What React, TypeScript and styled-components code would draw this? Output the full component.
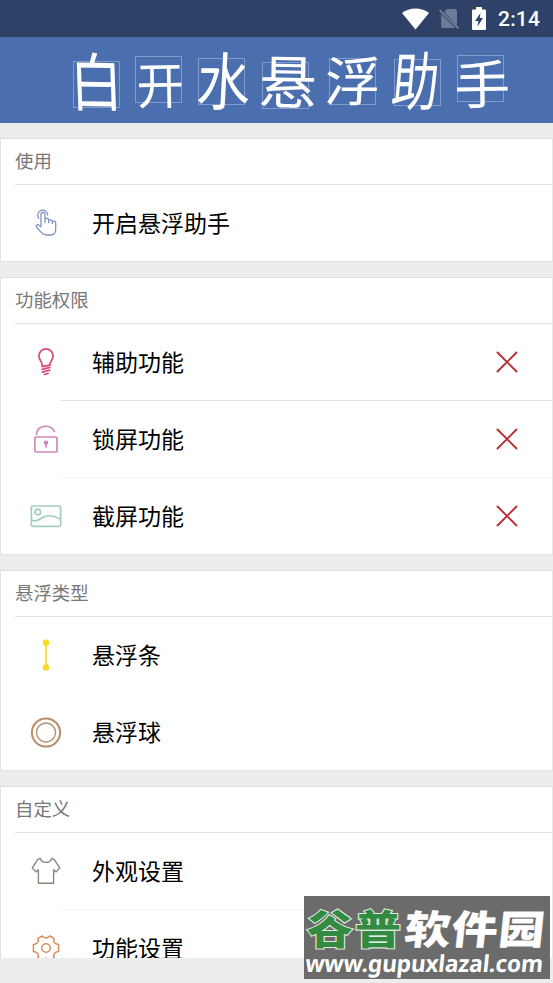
import React from 'react';
import styled, { createGlobalStyle } from 'styled-components';

const GlobalStyle = createGlobalStyle`
  * { box-sizing: border-box; }
  body {
    margin: 0;
    background: #ededed;
    font-family: "Noto Sans CJK SC", sans-serif;
    overflow: hidden;
  }
`;

const Screen = styled.div`
  position: relative;
  width: 553px;
  height: 983px;
  overflow: hidden;
  background: #ededed;
`;

const StatusBar = styled.header`
  height: 37px;
  display: flex;
  align-items: center;
  padding: 0 12px 0 402px;
  background: #2e4268;
  color: #fff;
`;

const StatusIcon = styled.svg<{ $gap: number }>`
  display: block;
  flex: none;
  margin-right: ${p => p.$gap}px;
`;

const Clock = styled.span`
  font: 500 21px/37px Roboto, sans-serif;
  letter-spacing: 0.2px;
  padding-top: 1px;
`;

const Banner = styled.h1`
  margin: 0;
  height: 86px;
  padding-left: 73px;
  display: flex;
  align-items: flex-start;
  background: #4b6fae;
`;

const GlyphCell = styled.span<{ $top: number; $gap: number }>`
  flex: none;
  width: 47px;
  height: 47px;
  margin-top: ${p => p.$top}px;
  margin-right: ${p => p.$gap}px;
  border: 1px solid #809bcb;
  display: flex;
  align-items: center;
  justify-content: center;
`;

const Glyph = styled.span<{ $shape: string }>`
  color: #fff;
  font-size: 50px;
  line-height: 50px;
  font-weight: 400;
  transform: ${p => p.$shape};
`;

const List = styled.main`
  height: 835px;
  padding-top: 15px;
  overflow: hidden;
`;

const Card = styled.section<{ $gap: number }>`
  background: #fff;
  border-left: 1px solid #e3e3e3;
  border-right: 1px solid #e8e8e8;
  box-shadow: inset 0 1px #dedede, 0 1px #e2e2e2;
  margin-bottom: ${p => p.$gap}px;
`;

const CardTitle = styled.h2`
  margin: 0 0 0 14px;
  height: 47px;
  border-bottom: 1px solid #dfdfdf;
  font-size: 18.4px;
  font-weight: 400;
  line-height: 45px;
  color: #777;
`;

const Row = styled.div`
  height: 76px;
  display: grid;
  grid-template-columns: 90px 1fr 90px;
  align-items: center;
`;

const Divider = styled.div<{ $color: string }>`
  height: 1px;
  margin-left: 60px;
  background: ${p => p.$color};
`;

const IconSlot = styled.span`
  display: flex;
  justify-content: center;
`;

const Icon = styled.svg`
  display: block;
  width: 34px;
  height: 34px;
  fill: none;
  stroke-linecap: round;
  stroke-linejoin: round;
`;

const Label = styled.span`
  padding: 0 0 2px 1px;
  font-size: 23px;
  line-height: 34px;
  color: #000;
`;

const Watermark = styled.aside`
  position: absolute;
  left: 304px;
  top: 896px;
  width: 246px;
  height: 83px;
  background: #6b6b6b;
  color: #fff;
  overflow: hidden;
`;

const Brand = styled.div`
  display: flex;
  height: 44px;
  margin-top: 9px;
  padding-left: 3px;
  font-size: 46px;
  font-weight: 900;
  line-height: 44px;
  transform: scaleY(0.86);
`;

const BrandPart = styled.span<{ $outlined?: boolean }>`
  width: ${p => (p.$outlined ? 98 : 144)}px;
  white-space: nowrap;
  letter-spacing: ${p => (p.$outlined ? 2 : 1)}px;
  color: ${p => (p.$outlined ? '#338b43' : '#fff')};
  -webkit-text-stroke: ${p => (p.$outlined ? '2.4px #dcebdc' : '0.2px #fff')};
  paint-order: stroke fill;
  transform: ${p => (p.$outlined ? 'none' : 'skewX(-5deg)')};
`;

const Site = styled.div`
  width: max-content;
  margin-top: 1px;
  font: 700 23.5px/26px "Noto Sans", sans-serif;
  letter-spacing: -0.2px;
  white-space: nowrap;
  transform: scaleX(0.965) skewX(-6deg);
  transform-origin: 0 100%;
`;

const Touch = () => (
  <Icon viewBox="0 0 34 34" stroke="#7d93bf" strokeWidth="1.3">
    <path d="M9.8 12.300a5 5 0 1 1 8.900-3.200" />
    <path d="M12 20V8.500a2 2 0 0 1 4 0v8M16 15.500v-1.800a1.900 1.900 0 0 1 3.700 0v3M19.700 15.600a1.800 1.800 0 0 1 3.600 0v1.800M23.300 16.800a1.700 1.700 0 0 1 3.400 0v6.700c0 3.600-2 5.500-5.500 5.500h-3.700c-2.400 0-4.200-1.200-6-3.300l-4-4.700c-1.200-1.700.8-3 2.200-1.900l2.300 1.700" />
  </Icon>
);

const Bulb = () => (
  <Icon viewBox="0 0 34 34" stroke="#d94d80" strokeWidth="1.8">
    <path d="M13.2 20.200c0-3.700-3.200-5.100-3.200-9.200a7 7.200 0 0 1 14 0c0 4.100-3.200 5.500-3.200 9.200" />
    <path d="m13.200 21.500 7.500-1.400M13.200 24.400l7.600-2.100M13.400 27.200l7.400-2.100M15.300 29.500l3.700-1" />
  </Icon>
);

const Lock = () => (
  <Icon viewBox="0 0 34 34" stroke="#cd8abc" strokeWidth="1.7">
    <rect x="5.8" y="15" width="22.2" height="15" rx="1.3" />
    <path d="M7.500 12.500C8.200 2.800 21.300 1.500 25.500 9.600" />
    <circle cx="17" cy="20.800" r="2.300" fill="#cd8abc" stroke="none" />
    <path d="M17 21v4" />
  </Icon>
);

const Photo = () => (
  <Icon viewBox="0 0 34 34" stroke="#a2cdbb" strokeWidth="1.700">
    <rect x="2.400" y="7" width="29.200" height="20.400" rx="1.500" />
    <circle cx="8.800" cy="13" r="2.800" />
    <path d="M3 21.200c4 1.800 7-.2 9.700-2.200 5.700-4 12-2.300 18.300 1" />
  </Icon>
);

const Bar = () => (
  <Icon viewBox="0 0 34 34" stroke="#f8dd55" strokeWidth="2.200">
    <path d="M17 5v24" />
    <circle cx="17" cy="4.800" r="3.200" fill="#f7db16" stroke="none" />
    <circle cx="17" cy="29.400" r="3.200" fill="#f7db16" stroke="none" />
  </Icon>
);

const Ball = () => (
  <Icon viewBox="0 0 34 34" stroke="#b78f6b">
    <circle cx="17" cy="17.500" r="14.100" strokeWidth="2" />
    <circle cx="17" cy="17.500" r="9.500" strokeWidth="1.400" />
  </Icon>
);

const Shirt = () => (
  <Icon viewBox="0 0 34 34" stroke="#87897b" strokeWidth="1.400">
    <path d="M11.200 4.400C13.400 9.700 20.600 9.700 22.800 4.400L25.300 5.700l5.400 8.200-3.600 4-2.500-2.100v13.400H9.400V15.800l-2.500 2.100-3.600-4 5.400-8.200z" />
  </Icon>
);

const Gear = () => (
  <Icon viewBox="0 0 34 34" stroke="#d98c5b" strokeWidth="1.500">
    <path d="M13.200 5c2.200 2.500 5.400 2.500 7.600 0l4.200 2.400c-1 3.500.9 5.800 4.600 6.200v6.800c-3.700.4-5.600 2.700-4.600 6.200L20.800 29c-2.200-2.500-5.400-2.500-7.600 0L9 26.600c1-3.500-.9-5.800-4.600-6.200v-6.800C8.100 13.200 10 10.900 9 7.400z" />
    <circle cx="17" cy="17" r="4.300" />
  </Icon>
);

const Cross = () => (
  <Icon viewBox="0 0 34 34" stroke="#b92c30" strokeWidth="1.900">
    <path d="m7.500 7.500 19 19m0-19-19 19" />
  </Icon>
);

const titleGlyphs = [
  { char: '白', top: 24, gap: 15, shape: 'translate(-1px, -7px) rotate(1deg) skewX(3deg) scale(1.05, 1.26)' },
  { char: '开', top: 19, gap: 16, shape: 'translate(1px, 2px) rotate(-1deg) scale(.94, 1)' },
  { char: '水', top: 21, gap: 17, shape: 'translate(2px, -5px) skewX(-3deg) scale(1.07, 1.26)' },
  { char: '悬', top: 25, gap: 20, shape: 'translate(2px, -8px) rotate(1deg) scale(1.15, 1.18)' },
  { char: '浮', top: 21, gap: 18, shape: 'translate(0, -4px) skewX(-3deg) scale(1.12, 1.06)' },
  { char: '助', top: 22, gap: 16, shape: 'translate(-2px, -6px) skewX(-5deg) scale(.94, 1.27)' },
  { char: '手', top: 18, gap: 0, shape: 'translate(1px, 2px) rotate(-1deg) scale(1.12, 1.05)' },
];

type Item = { label: string; icon: () => React.JSX.Element; denied?: boolean; line?: string };
const sections: { title: string; gap: number; items: Item[] }[] = [
  { title: '使用', gap: 16, items: [{ label: '开启悬浮助手', icon: Touch }] },
  {
    title: '功能权限',
    gap: 16,
    items: [
      { label: '辅助功能', icon: Bulb, denied: true, line: '#dedede' },
      { label: '锁屏功能', icon: Lock, denied: true, line: '#f6f6f6' },
      { label: '截屏功能', icon: Photo, denied: true },
    ],
  },
  {
    title: '悬浮类型',
    gap: 16,
    items: [
      { label: '悬浮条', icon: Bar, line: '#fcfcfc' },
      { label: '悬浮球', icon: Ball },
    ],
  },
  {
    title: '自定义',
    gap: 0,
    items: [
      { label: '外观设置', icon: Shirt, line: '#f6f6f6' },
      { label: '功能设置', icon: Gear },
    ],
  },
];

export default function App() {
  return (
    <Screen>
      <GlobalStyle />
      <StatusBar>
        <StatusIcon $gap={10} width="27" height="22" viewBox="0 0 27 22">
          <path d="M0 5C7-1 20-1 27 5L13.5 21.5z" fill="#fff" />
        </StatusIcon>
        <StatusIcon $gap={13} width="20" height="22" viewBox="0 0 20 22">
          <path d="M8 1h8q2 0 2 2v14.500L5 4zM2.200 6 16.500 20H4q-1.800 0-1.800-2z" fill="#6c7b98" />
          <path d="m.5 2 19 18.500" stroke="#75839e" strokeWidth="1.700" />
        </StatusIcon>
        <StatusIcon $gap={12} width="14" height="23" viewBox="0 0 14 23">
          <path d="M4 0h6v2.500h3q1 0 1 1V22q0 1-1 1H1q-1 0-1-1V3.500q0-1 1-1h3z" fill="#fff" />
          <path d="M8.500 6 3 14h3.300l-.8 5.500L11 11H7.700z" fill="#2e4268" />
        </StatusIcon>
        <Clock>2:14</Clock>
      </StatusBar>
      <Banner>
        {titleGlyphs.map(g => (
          <GlyphCell key={g.char} $top={g.top} $gap={g.gap}>
            <Glyph $shape={g.shape}>{g.char}</Glyph>
          </GlyphCell>
        ))}
      </Banner>
      <List>
        {sections.map(section => (
          <Card key={section.title} $gap={section.gap}>
            <CardTitle>{section.title}</CardTitle>
            {section.items.map(({ label, icon: ItemIcon, denied, line }) => (
              <React.Fragment key={label}>
                <Row>
                  <IconSlot><ItemIcon /></IconSlot>
                  <Label>{label}</Label>
                  {denied && <IconSlot><Cross /></IconSlot>}
                </Row>
                {line && <Divider $color={line} />}
              </React.Fragment>
            ))}
          </Card>
        ))}
      </List>
      <Watermark>
        <Brand>
          <BrandPart $outlined>谷普</BrandPart>
          <BrandPart>软件园</BrandPart>
        </Brand>
        <Site>www.gupuxlazal.com</Site>
      </Watermark>
    </Screen>
  );
}
